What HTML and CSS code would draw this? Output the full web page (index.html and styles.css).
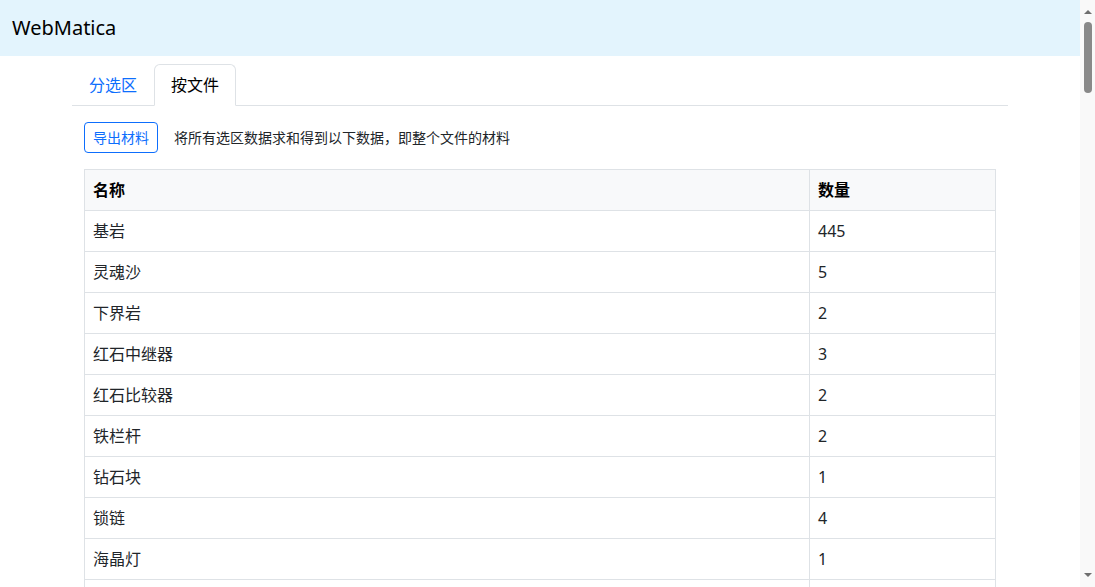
FILE: index.html
```html
<!DOCTYPE html>
<html lang="zh-CN">
<head>
<meta charset="utf-8">
<title>WebMatica</title>
<link rel="stylesheet" href="styles.css">
</head>
<body>
<div class="page">
  <header class="navbar">
    <span class="brand">WebMatica</span>
  </header>
  <main class="container">
    <nav class="tabs">
      <a class="tab">分选区</a>
      <a class="tab active">按文件</a>
    </nav>
    <section class="tab-pane">
      <div class="toolbar">
        <button class="btn-outline">导出材料</button>
        <span class="hint">将所有选区数据求和得到以下数据，即整个文件的材料</span>
      </div>
      <table class="materials">
        <thead>
          <tr><th class="name">名称</th><th class="qty">数量</th></tr>
        </thead>
        <tbody>
          <tr><td>基岩</td><td>445</td></tr>
          <tr><td>灵魂沙</td><td>5</td></tr>
          <tr><td>下界岩</td><td>2</td></tr>
          <tr><td>红石中继器</td><td>3</td></tr>
          <tr><td>红石比较器</td><td>2</td></tr>
          <tr><td>铁栏杆</td><td>2</td></tr>
          <tr><td>钻石块</td><td>1</td></tr>
          <tr><td>锁链</td><td>4</td></tr>
          <tr><td>海晶灯</td><td>1</td></tr>
          <tr class="partial"><td></td><td></td></tr>
        </tbody>
      </table>
    </section>
  </main>
</div>
<div class="scrollbar" aria-hidden="true">
  <span class="arrow up"></span>
  <span class="thumb"></span>
  <span class="arrow down"></span>
</div>
</body>
</html>
```
FILE: styles.css
```css
html,
body {
  height: 100%;
}

body {
  margin: 0;
  display: flex;
  overflow: hidden;
  font-family: "Noto Sans", "Noto Sans CJK SC", sans-serif;
  font-size: 16px;
  line-height: 1.5;
  color: #212529;
  background: #ffffff;
}

.page {
  flex: 1;
  min-width: 0;
  height: 100%;
  overflow: hidden;
}

.scrollbar {
  width: 15px;
  flex: none;
  height: 100%;
  box-sizing: border-box;
  background: #f9f9f9;
  display: flex;
  flex-direction: column;
  align-items: center;
  padding: 10px 0 10px;
}

.arrow {
  width: 0;
  height: 0;
  border-left: 4px solid transparent;
  border-right: 4px solid transparent;
}

.arrow.up {
  border-bottom: 4px solid #6f6f6f;
}

.arrow.down {
  margin-top: auto;
  border-top: 4px solid #6f6f6f;
}

.thumb {
  width: 8px;
  height: 71px;
  margin-top: 8px;
  border-radius: 4px;
  background: #898989;
}

.navbar {
  background: #e3f4fd;
  padding: 8px 12px;
  display: flex;
  align-items: center;
}

.brand {
  font-size: 20px;
  line-height: 30px;
  padding: 5px 0;
  color: #000000;
}

.container {
  max-width: 936px;
  margin: 8px auto 0;
  padding: 0 12px;
}

.tabs {
  display: flex;
  border-bottom: 1px solid #dee2e6;
}

.tab {
  display: block;
  padding: 8px 16px;
  border: 1px solid transparent;
  border-top-left-radius: 6px;
  border-top-right-radius: 6px;
  margin-bottom: -1px;
  color: #0d6efd;
  line-height: 24px;
  cursor: pointer;
}

.tab.active {
  color: #000000;
  background: #ffffff;
  border-color: #dee2e6 #dee2e6 #ffffff;
}

.tab-pane {
  padding: 16px 12px;
}

.toolbar {
  display: flex;
  align-items: center;
  gap: 16px;
  margin-bottom: 16px;
}

.btn-outline {
  font-family: inherit;
  font-size: 14px;
  line-height: 21px;
  padding: 4px 8px;
  color: #0d6efd;
  background: #ffffff;
  border: 1px solid #0d6efd;
  border-radius: 4px;
  cursor: pointer;
}

.hint {
  font-size: 14px;
  line-height: 21px;
  color: #212529;
}

.materials {
  width: 100%;
  border-collapse: collapse;
  border: 1px solid #dee2e6;
}

.materials th,
.materials td {
  border: 1px solid #dee2e6;
  padding: 8px;
  text-align: left;
  line-height: 24px;
}

.materials th {
  background: #f8f9fa;
  font-weight: 700;
  color: #000000;
}

.materials .qty {
  width: 169px;
}

.materials .partial td {
  height: 24px;
}
```
